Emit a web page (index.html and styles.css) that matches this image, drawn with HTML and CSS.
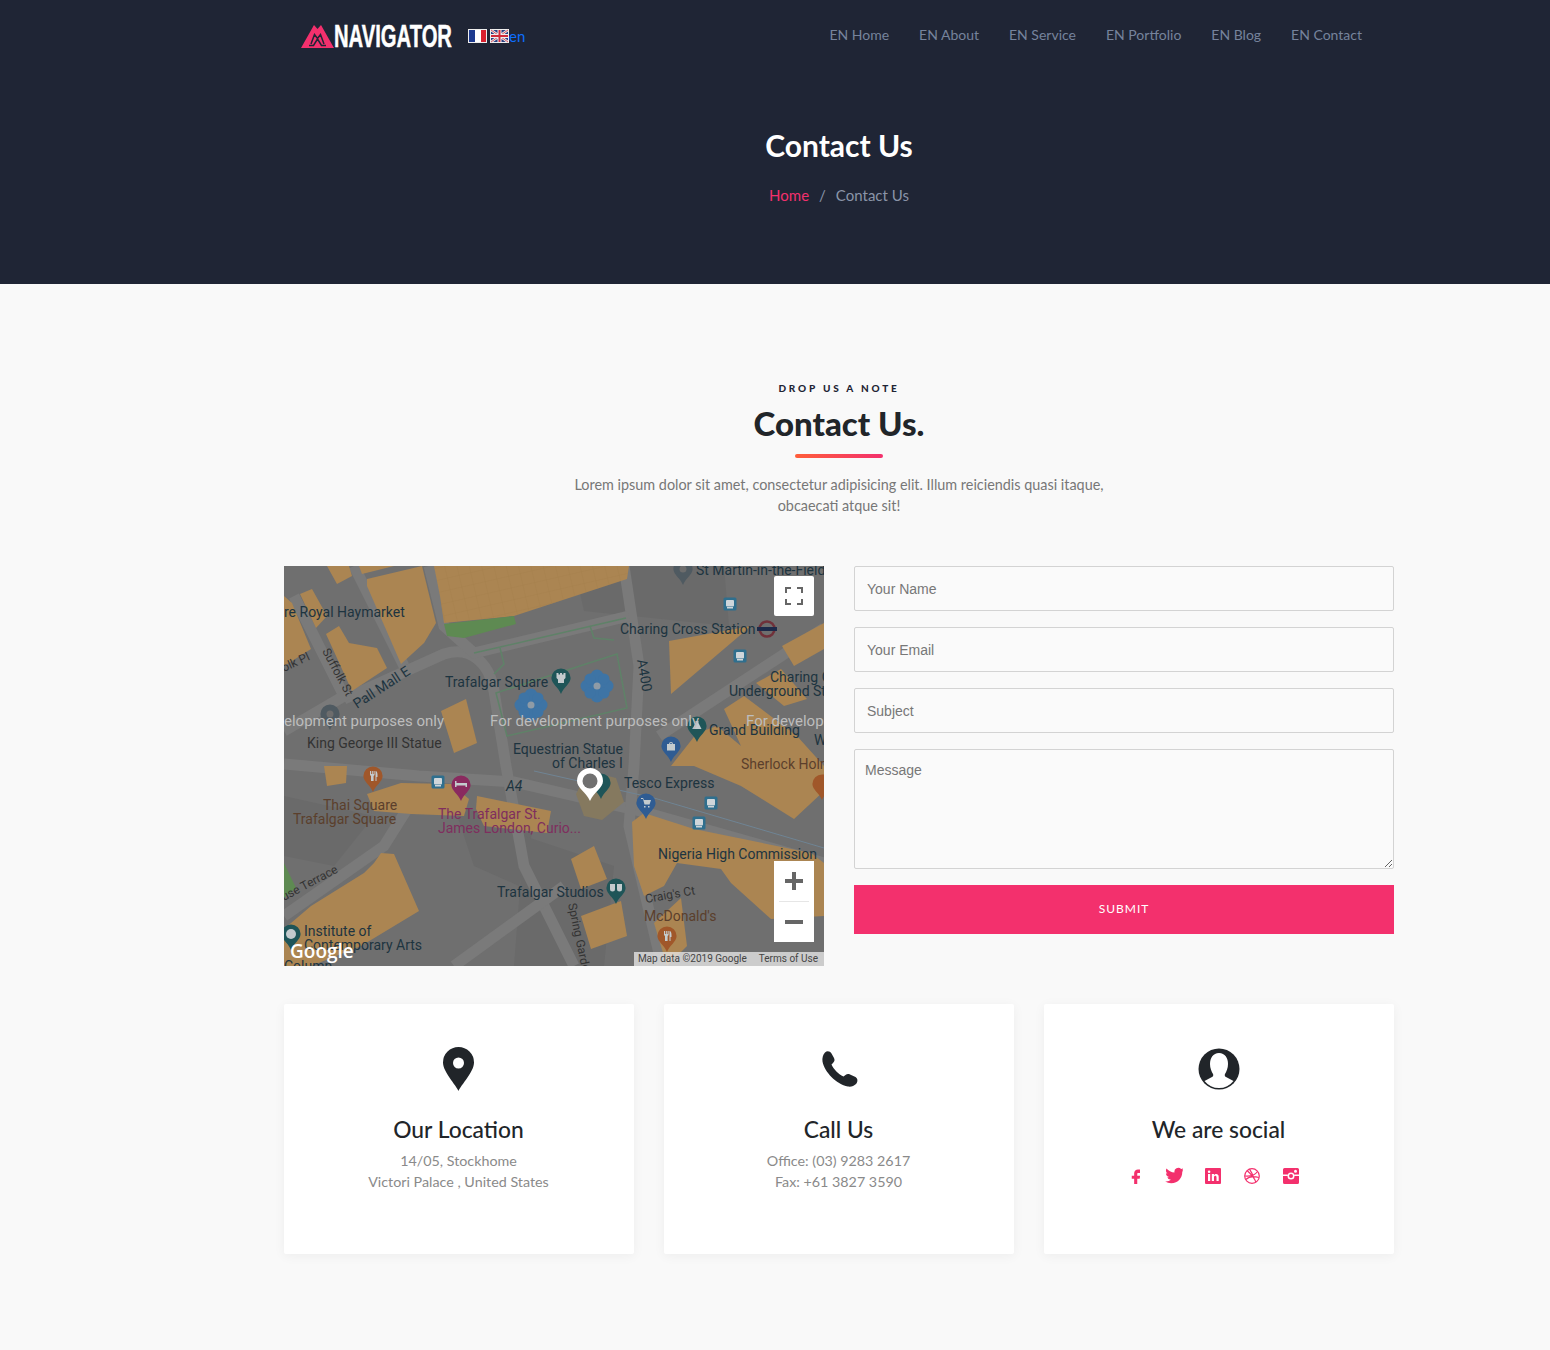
FILE: index.html
```html
<!DOCTYPE html>
<html lang="en">
<head>
<meta charset="utf-8">
<title>Contact Us</title>
<link rel="stylesheet" href="styles.css">
</head>
<body>
<header class="hero">
  <div class="wrap">
    <nav class="topnav">
      <div class="brand">
        <svg class="logo-mark" viewBox="0 0 33 23" width="33" height="23"><path fill="#f3306d" d="M0 23 13 0l3.500 4L20 0l13 23Z"/><path fill="none" stroke="#1f2535" stroke-width="1.500" d="M8 20.500H12.500L16.500 14 20.500 20.500H25M10 19 13.500 9.500 16.500 13.500 19.500 9.500 23 19"/></svg>
        <span class="logo-box"><span class="logo-text">NAVIGATOR</span></span>
        <span class="flags">
          <svg class="flag" viewBox="0 0 19 14" width="19" height="14"><rect width="19" height="14" fill="#eee"/><rect x="1" y="1" width="6" height="12" fill="#1d3a8f"/><rect x="7" y="1" width="6" height="12" fill="#fff"/><rect x="13" y="1" width="5" height="12" fill="#d8202f"/></svg>
          <svg class="flag" viewBox="0 0 19 14" width="19" height="14"><rect width="19" height="14" fill="#eee"/><rect x="1" y="1" width="17" height="12" fill="#2b3f80"/><path d="M1 1 18 13M18 1 1 13" stroke="#eee" stroke-width="2.500"/><path d="M1 1 18 13M18 1 1 13" stroke="#cf2a3a" stroke-width=".8"/><path d="M9.500 1v12M1 7h17" stroke="#eee" stroke-width="4"/><path d="M9.500 1v12M1 7h17" stroke="#cf2a3a" stroke-width="2"/></svg>
          <a class="lang" href="#">en</a>
        </span>
      </div>
      <ul class="menu">
        <li><a href="#">EN Home</a></li>
        <li><a href="#">EN About</a></li>
        <li><a href="#">EN Service</a></li>
        <li><a href="#">EN Portfolio</a></li>
        <li><a href="#">EN Blog</a></li>
        <li><a href="#">EN Contact</a></li>
      </ul>
    </nav>
    <div class="hero-title">
      <h1>Contact Us</h1>
      <p class="crumbs"><a href="#">Home</a><span class="sep">/</span><span>Contact Us</span></p>
    </div>
  </div>
</header>

<main class="wrap content">
  <div class="intro">
    <p class="eyebrow">DROP US A NOTE</p>
    <h2>Contact Us.</h2>
    <div class="rule"></div>
    <p class="lead">Lorem ipsum dolor sit amet, consectetur adipisicing elit. Illum reiciendis quasi itaque, obcaecati atque sit!</p>
  </div>

  <div class="contact-row">
    <div class="map">
      <svg class="map-art" viewBox="0 0 540 400" width="540" height="400">
        <defs>
          <path id="drop" d="M0 20C-3 12-12 7-12 0a12 12 0 0 1 24 0C12 7 3 12 0 20Z"/>
          <g id="bus"><rect x="-6.500" y="-6.500" width="13" height="13" rx="1.500" fill="#2f6f8e"/><rect x="-4" y="-4" width="8" height="6.500" rx="1" fill="#cfd6da"/><rect x="-3" y="3" width="6" height="1.500" fill="#cfd6da"/></g>
          <g id="flower"><circle r="8"/><circle cx="-10" r="6.500"/><circle cx="10" r="6.500"/><circle cy="-10" r="6.500"/><circle cy="10" r="6.500"/><circle cx="-7" cy="-7" r="5.500"/><circle cx="7" cy="-7" r="5.500"/><circle cx="-7" cy="7" r="5.500"/><circle cx="7" cy="7" r="5.500"/></g>
          <pattern id="bld" width="12" height="12" patternUnits="userSpaceOnUse" patternTransform="rotate(-13)"><path d="M0 0H12M0 0V12" stroke="#a27c4b" stroke-width=".7" fill="none"/></pattern>
        </defs>
        <rect width="540" height="400" fill="#6f6f6f"/>
        <g class="blocks">
          <path d="M290 0H440L445 60 300 45Z"/>
          <path d="M170 240 250 260 235 320 190 300Z"/>
          <path d="M240 270 330 300 320 400 230 400Z"/>
          <path d="M0 230 90 250 50 300 0 290Z"/>
        </g>
        <g class="roads">
          <path d="M0 198 135 210 230 216 360 246 540 297"/>
          <path d="M60 133 160 88C185 80 205 95 210 125L222 200 240 300 290 400"/>
          <path d="M375 170 540 62"/>
          <path d="M340 0 355 100 350 200 345 260 378 400"/>
          <path d="M10 30 60 130 0 165"/>
          <path d="M70 0 120 100"/>
          <path d="M145 0 160 60 190 87 345 50"/>
          <path d="M0 350 100 280 125 240"/>
          <path d="M170 400 280 320"/>
        </g>
        <path d="M250 205 370 232 540 282" fill="none" stroke="#6f8494" stroke-width="1"/>
        <g fill="#ab8552">
          <path d="M83 13 138 0 152 57 140 77 117 98 83 20Z"/>
          <path d="M150 0H345L343 13 230 50 160 57 156 30Z"/>
          <path d="M16 28 28 23 43 50 32 62Z"/>
          <path d="M42 68 55 60 65 77 93 82 103 102 68 125Z"/>
          <path d="M0 30 8 37 27 83 0 100Z"/>
          <path d="M43 0H65L68 10 53 18Z"/>
          <path d="M75 0H110L78 8Z"/>
          <path d="M157 145 182 133 193 177 170 187Z"/>
          <path d="M385 75 467 60 387 128Z"/>
          <path d="M498 80 540 57V83L510 100Z"/>
          <path d="M472 117 497 103 523 133 500 140Z"/>
          <path d="M387 200 413 167 433 160 457 180 440 143 460 130 513 170 540 200V225L510 253 457 220 410 200Z"/>
          <path d="M348 256 360 247 410 263 527 287 540 297V350L487 353 447 317 437 303 393 297 380 320 360 330 350 300Z"/>
          <path d="M287 293 310 280 323 313 297 323Z"/>
          <path d="M297 350 337 335 343 370 307 383Z"/>
          <path d="M370 357 397 332 403 380 383 400Z"/>
          <path d="M83 228 117 217 167 218 185 233 180 250 127 248 90 245Z"/>
          <path d="M40 200H63L62 217 43 220Z"/>
          <path d="M193 230 267 245 263 267 200 260 192 243Z"/>
          <path d="M97 287 110 288 135 345 77 380 27 400H0V363L27 340 80 307 90 297Z"/>
        </g>
        <path fill="url(#bld)" d="M150 0H345L343 13 230 50 160 57 156 30Z"/>
        <path fill="#5e8a52" d="M160 58 230 50 232 58 180 72 163 70Z"/>
        <path fill="#5e8a52" d="M0 297 12 322 0 332Z"/>
        <path fill="#85795f" d="M292 228 304 205 332 212 340 236 318 254 300 250Z"/>
        <g fill="none" stroke="#5f8268" stroke-width="1.500">
          <path d="M190 87 342 52"/>
          <path d="M212 127 333 88 343 142 223 170Z"/>
          <path d="M216 82 220 98 210 108"/>
          <path d="M306 60 310 72 330 74"/>
        </g>
        <g fill="#3e74a5"><use href="#flower" x="313" y="120"/><use href="#flower" x="247" y="139"/></g>
        <circle cx="313" cy="120" r="3.500" fill="#8f9ba6"/><circle cx="247" cy="139" r="3.500" fill="#8f9ba6"/>

        <g class="lbl">
          <text x="0" y="51">re Royal Haymarket</text>
          <text x="161" y="121">Trafalgar Square</text>
          <text x="412" y="9">St Martin-in-the-Fields</text>
          <text x="336" y="68">Charing Cross Station</text>
          <text x="486" y="116">Charing C</text>
          <text x="445" y="130">Underground St</text>
          <text x="425" y="169">Grand Building</text>
          <text x="530" y="179">W</text>
          <text x="229" y="188">Equestrian Statue</text>
          <text x="268" y="202">of Charles I</text>
          <text x="340" y="222">Tesco Express</text>
          <text x="374" y="293">Nigeria High Commission</text>
          <text x="213" y="331">Trafalgar Studios</text>
          <text x="20" y="370">Institute of</text>
          <text x="20" y="384">Contemporary Arts</text>
          <text x="0" y="405">Column</text>
          <text x="23" y="182" class="lbl-dim">King George III Statue</text>
          <text transform="translate(73 143) rotate(-33)">Pall Mall E</text>
          <text transform="translate(353 94) rotate(80)">A400</text>
          <text x="222" y="225" class="lbl-it">A4</text>
        </g>
        <g class="lbl-small">
          <text transform="translate(38 85) rotate(62)">Suffolk St</text>
          <text transform="translate(0 106) rotate(-25)">olk Pl</text>
          <text transform="translate(0 335) rotate(-28)">use Terrace</text>
          <text transform="translate(362 337) rotate(-10)">Craig's Ct</text>
          <text transform="translate(284 338) rotate(78)">Spring Garde</text>
        </g>
        <g class="lbl-brown">
          <text x="457" y="203">Sherlock Holn</text>
          <text x="39" y="244">Thai Square</text>
          <text x="9" y="258">Trafalgar Square</text>
          <text x="360" y="355">McDonald's</text>
        </g>
        <g class="lbl-purple">
          <text x="154" y="253">The Trafalgar St.</text>
          <text x="154" y="267">James London, Curio...</text>
        </g>

        <g fill="#4f5a61"><use href="#drop" transform="translate(46 148) scale(.8)"/><use href="#drop" transform="translate(399 3) scale(.8)"/></g>
        <g fill="#1f5558">
          <use href="#drop" transform="translate(277 112) scale(.8)"/>
          <use href="#drop" transform="translate(413 160) scale(.8)"/>
          <use href="#drop" transform="translate(7 368) scale(.8)"/>
          <use href="#drop" transform="translate(332 322) scale(.8)"/>
          <use href="#drop" transform="translate(317 217) scale(.8)"/>
        </g>
        <g fill="#2f5c93"><use href="#drop" transform="translate(387 180) scale(.8)"/><use href="#drop" transform="translate(362 237) scale(.8)"/></g>
        <g fill="#a0572a"><use href="#drop" transform="translate(89 210) scale(.8)"/><use href="#drop" transform="translate(383 370) scale(.8)"/><use href="#drop" transform="translate(538 218) scale(.8)"/></g>
        <use href="#drop" fill="#8a2a5f" transform="translate(177 219) scale(.8)"/>
        <g fill="#c4cbce">
          <circle cx="46" cy="148" r="3.500" fill="#6d6d6d"/><circle cx="399" cy="3" r="3.500" fill="#6d6d6d"/>
          <path d="M272.500 107h2v1.500h1.500V107h2v1.500h1.500V107h2v5l-1.500 1.500V117h-6v-3.500l-1.500-1.500Z"/>
          <path d="M411.500 155h3v2l2 4 1 2h-9l1-2 2-4Z"/>
          <circle cx="7" cy="368" r="5"/>
          <path d="M326 318h5v5a2.500 2.500 0 0 1-5 0ZM333 318h5v5a2.500 2.500 0 0 1-5 0Z"/>
          <path d="M383 178h8v6.500h-8ZM385 178a2 2 0 0 1 4 0h-1a1 1 0 0 0-2 0Z"/>
          <path d="M357 232h2l1 2h7l-1.500 4.500h-5l-1.500-5.500h-2ZM360 240h1.500v1.500H360ZM364 240h1.500v1.500H364Z"/>
          <path d="M86 205h1v3h.8v-3h1v3h.8v-3h1v4l-1 1v5h-2.600v-5l-1-1Z"/>
          <path d="M91.500 205c1.500 0 2 2 2 4v2h-1v4h-1Z"/>
          <path d="M380 365h1v3h.8v-3h1v3h.8v-3h1v4l-1 1v5h-2.600v-5l-1-1Z"/>
          <path d="M385.500 365c1.500 0 2 2 2 4v2h-1v4h-1Z"/>
          <path d="M171 215h1.500v2h10.500v4h-1.500v-1.500h-9V221H171Z"/>
        </g>
        <use href="#bus" x="446" y="38"/><use href="#bus" x="456" y="90"/><use href="#bus" x="154" y="216"/><use href="#bus" x="427" y="237"/><use href="#bus" x="415" y="257"/>
        <circle cx="483" cy="63" r="7.500" fill="none" stroke="#70313a" stroke-width="2.500"/><rect x="473" y="61" width="20" height="4" fill="#1d2a4a"/>
        <path d="M306 235C302 226 293 222 293 215a13 13 0 0 1 26 0C319 222 310 226 306 235Z" fill="#fff"/><circle cx="306" cy="215" r="7.500" fill="#707070"/>
        <g class="watermark">
          <text x="0" y="160">elopment purposes only</text>
          <text x="206" y="160">For development purposes only</text>
          <text x="462" y="160">For develop</text>
        </g>
        <text x="6" y="392" class="g-logo">Google</text>
      </svg>
      <button class="map-btn map-full" type="button" aria-label="Fullscreen">
        <svg viewBox="0 0 18 18" width="18" height="18"><path d="M0 6V0h6v2H2v4Zm12-6h6v6h-2V2h-4ZM0 12h2v4h4v2H0Zm16 0h2v6h-6v-2h4Z" fill="#666"/></svg>
      </button>
      <div class="map-zoom">
        <button class="map-btn" type="button" aria-label="Zoom in"><svg viewBox="0 0 18 18" width="18" height="18"><path d="M7 0h4v7h7v4h-7v7H7v-7H0V7h7Z" fill="#666"/></svg></button>
        <i class="zoom-sep"></i>
        <button class="map-btn" type="button" aria-label="Zoom out"><svg viewBox="0 0 18 18" width="18" height="18"><rect y="7" width="18" height="4" fill="#666"/></svg></button>
      </div>
      <div class="attrib"><span>Map data ©2019 Google</span><span>Terms of Use</span></div>
    </div>

    <form class="form">
      <input type="text" placeholder="Your Name">
      <input type="email" placeholder="Your Email">
      <input type="text" placeholder="Subject">
      <textarea placeholder="Message"></textarea>
      <button class="submit" type="button">SUBMIT</button>
    </form>
  </div>

  <div class="cards">
    <article class="card">
      <svg class="card-icon" viewBox="0 0 31 44" width="31" height="44"><path fill-rule="evenodd" fill="#212529" d="M15.500 44C13 38 0 25 0 15.500a15.500 15.500 0 0 1 31 0C31 25 18 38 15.500 44ZM15.500 10.500a5.500 5.500 0 1 0 0 11 5.500 5.500 0 0 0 0-11Z"/></svg>
      <h3>Our Location</h3>
      <p>14/05, Stockhome<br>Victori Palace , United States</p>
    </article>
    <article class="card">
      <svg class="card-icon" viewBox="0 0 44 44" width="44" height="44"><path fill="#212529" d="M8 5.500C10 3.500 13 4 14.500 6.500L17 11C18 13 17.500 14.500 16 16L14.500 17.500C16.500 22 21 27 26.500 29.500L28.500 28C30 26.800 31.500 26.800 33 27.500L38.500 30C41 31.500 41 35 39 37C37 39 34 40 31 39.500C19 37 7.500 25 5.500 14.500 5 11 6 7.500 8 5.500Z"/></svg>
      <h3>Call Us</h3>
      <p>Office: (03) 9283 2617<br>Fax: +61 3827 3590</p>
    </article>
    <article class="card">
      <svg class="card-icon" viewBox="0 0 44 44" width="44" height="44"><circle cx="22" cy="22" r="20.500" fill="#212529"/><path fill="#fff" d="M22 6c6 0 9 5 9 11 0 4-1.500 7.500-3 10-.6 1 0 2.500 1 3l7.500 4a18.500 18.500 0 0 1-29 0l7.500-4c1-.5 1.600-2 1-3-1.500-2.500-3-6-3-10 0-6 3-11 9-11Z"/></svg>
      <h3>We are social</h3>
      <div class="social">
        <a href="#" aria-label="Facebook"><svg viewBox="1 1 16 23" width="11" height="16"><path d="M14 8h3.500V3H14c-3 0-5.500 2.500-5.500 5.500V12H5v4.500h3.500V24H13v-7.500h3.500l.7-4.500H13V9c0-.6.400-1 1-1Z"/></svg></a>
        <a href="#" aria-label="Twitter"><svg viewBox="-1.500 0 24 24" width="19" height="19"><path d="M23.950 4.570a10 10 0 0 1-2.820.78 4.960 4.960 0 0 0 2.160-2.720c-.95.55-2 .96-3.130 1.200a4.920 4.920 0 0 0-8.380 4.480C7.690 8.100 4.070 6.130 1.640 3.160a4.820 4.820 0 0 0-.67 2.480c0 1.710.87 3.210 2.190 4.100a4.900 4.900 0 0 1-2.230-.61v.06c0 2.390 1.700 4.380 3.950 4.830a5 5 0 0 1-2.210.08 4.940 4.940 0 0 0 4.600 3.420A9.870 9.870 0 0 1 0 19.540a14 14 0 0 0 7.560 2.210c9.050 0 14-7.500 14-13.980 0-.21 0-.42-.02-.63a9.940 9.940 0 0 0 2.410-2.570z"/></svg></a>
        <a href="#" aria-label="LinkedIn"><svg viewBox="0 0 16 16" width="16" height="16"><path fill-rule="evenodd" d="M1 0h14a1 1 0 0 1 1 1v14a1 1 0 0 1-1 1H1a1 1 0 0 1-1-1V1a1 1 0 0 1 1-1Zm2 6v7h2.200V6Zm1.100-3.500a1.300 1.300 0 1 0 0 2.600 1.300 1.300 0 0 0 0-2.600ZM6.800 6v7H9V9.300c0-2 2.500-2 2.500 0V13h2.200V8.800c0-3.500-3.500-3.500-4.700-1.700V6Z"/></svg></a>
        <a href="#" aria-label="Dribbble"><svg viewBox="0 0 16 16" width="16" height="16"><g fill="none" stroke="#f3306d" stroke-width="1.200"><circle cx="8" cy="8" r="7.300"/><path d="M3 2.500C7 6 11 11 12 14.500M1 8c5 .5 10-1 12.500-4.500M5.500 1.200c2 3 3.500 6 4.500 9M1.800 11.500C5 8.500 9.500 8 14.800 9.500"/></g></svg></a>
        <a href="#" aria-label="Instagram"><svg viewBox="0 0 16 16" width="16" height="16"><path fill-rule="evenodd" d="M1.500 0h13A1.500 1.500 0 0 1 16 1.500v13a1.500 1.500 0 0 1-1.500 1.500h-13A1.500 1.500 0 0 1 0 14.500v-13A1.500 1.500 0 0 1 1.500 0ZM8 4.500a3.500 3.500 0 1 0 0 7 3.500 3.500 0 0 0 0-7Zm0 1.500a2 2 0 1 1 0 4 2 2 0 0 1 0-4ZM12.500 1.800a1.500 1.500 0 1 0 0 3 1.500 1.500 0 0 0 0-3ZM0 6.500h4.500v1.600H0Zm11.500 0H16v1.600h-4.500Z"/></svg></a>
      </div>
    </article>
  </div>
</main>
</body>
</html>
```
FILE: styles.css
```css
* { box-sizing: border-box; }
html, body { margin: 0; padding: 0; }
body {
  background: #f9f9f9;
  font-family: "Lato", "Open Sans", sans-serif;
  color: #212529;
  min-height: 1350px;
}
a { text-decoration: none; }
ul { list-style: none; margin: 0; padding: 0; }
h1, h2, h3, p { margin: 0; }

.wrap { width: 1110px; margin-left: 284px; }

.hero { background: #1f2535; height: 284px; }
.topnav {
  display: flex;
  align-items: center;
  justify-content: space-between;
  height: 72px;
  padding: 0 32px 0 17px;
}
.brand { display: flex; align-items: center; }
.logo-mark { display: block; }
.logo-box { display: block; width: 119px; height: 24px; }
.logo-text {
  display: block;
  font-family: "Liberation Sans", sans-serif;
  font-weight: 700;
  font-size: 32px;
  line-height: 24px;
  color: #fff;
  white-space: nowrap;
  -webkit-text-stroke: .5px #fff;
  transform: scaleX(.632);
  transform-origin: left center;
}
.flags { display: flex; align-items: center; gap: 3px; margin-left: 15px; }
.flag { display: block; }
.lang { color: #0d6efd; font-size: 15px; line-height: 20px; margin-left: -3px; }
.menu { display: flex; gap: 30px; margin-bottom: 2px; }
.menu a { display: block; color: #76839c; font-size: 14px; line-height: 20px; }

.hero-title { text-align: center; padding-top: 53px; }
.hero-title h1 { color: #fff; font-size: 30px; line-height: 40px; font-weight: 700; }
.crumbs { margin-top: 18px; font-size: 15px; line-height: 24px; color: #8a94a8; }
.crumbs a { color: #f3306d; }
.sep { margin: 0 10px; }

.content { padding-top: 96px; padding-bottom: 96px; }
.intro { text-align: center; }
.eyebrow { font-size: 10px; line-height: 16px; font-weight: 900; letter-spacing: 2.800px; color: #1f2535; }
.intro h2 { font-size: 33px; line-height: 44px; font-weight: 900; color: #212529; margin-top: 5px; }
.rule {
  width: 88px; height: 4px; margin: 9px auto 0;
  border-radius: 2px;
  background: linear-gradient(90deg, #ff5e3a, #f3306d);
}
.lead { width: 560px; margin: 16px auto 0; font-size: 14.400px; line-height: 21px; color: #777; }

.contact-row { display: flex; gap: 30px; margin-top: 50px; align-items: flex-start; }
.map { position: relative; width: 540px; height: 400px; overflow: hidden; flex: none; }
.map-art { display: block; font-family: "Roboto", sans-serif; }
.blocks path { fill: #6a6a6a; }
.roads path { fill: none; stroke: #7a7a7a; stroke-width: 11; }
.lbl text { font-size: 14px; fill: #1d3440; }
.lbl .lbl-dim { fill: #333; }
.lbl .lbl-it { font-style: italic; }
.lbl-small text { font-size: 12px; fill: #333; }
.lbl-brown text { font-size: 14px; fill: #5b3f2c; }
.lbl-purple text { font-size: 14px; fill: #7f2e5e; }
.watermark text { font-size: 15px; fill: #bdbdbd; }
.g-logo { font-family: "Open Sans", sans-serif; font-size: 19px; font-weight: 600; fill: #fff; }

.map-btn {
  display: flex; align-items: center; justify-content: center;
  width: 40px; height: 40px; padding: 0; border: 0; background: #fff;
}
.map-full { position: absolute; top: 10px; right: 10px; border-radius: 2px; }
.map-zoom {
  position: absolute; top: 295px; right: 10px; width: 40px;
  background: #fff; border-radius: 2px;
}
.zoom-sep { display: block; height: 1px; width: 30px; margin: 0 5px; background: #e6e6e6; }
.attrib {
  position: absolute; right: 0; bottom: 0;
  display: flex; gap: 12px; height: 14px; padding: 0 6px 0 4px;
  background: rgba(235,235,235,.75);
  font: 10px/14px "Roboto", sans-serif; color: #444;
}

.form { flex: 1; display: flex; flex-direction: column; gap: 16px; }
.form input, .form textarea {
  display: block; width: 100%;
  border: 1px solid #d3d3d3; border-radius: 2px; background: #fafafa;
  font: 14px "Liberation Sans", Arial, sans-serif; color: #333;
  outline: 0;
}
.form input { height: 45px; padding: 0 12px; }
.form textarea { height: 120px; padding: 12px 10px; }
.form ::placeholder { color: #777; opacity: 1; }
.submit {
  height: 49px; border: 0; padding: 0 0 2px; background: #f3306d; color: #fff;
  font: 400 12px "Lato", sans-serif; letter-spacing: 1px;
}

.cards { display: flex; gap: 30px; margin-top: 38px; }
.card {
  flex: 1; height: 250px; background: #fff; border-radius: 2px;
  box-shadow: 0 2px 12px rgba(0,0,0,.05);
  padding: 43px 1px 0 0; text-align: center;
}
.card-icon { display: block; margin: 0 auto; }
.card h3 { font-size: 22.800px; line-height: 30px; font-weight: 500; color: #212529; margin-top: 23px; }
.card p { font-size: 14.300px; line-height: 21px; color: #8a8a8a; margin-top: 6px; }
.social { display: flex; justify-content: center; align-items: center; gap: 22px; margin: 22px 12px 0 0; }
.social a { display: flex; align-items: center; justify-content: center; width: 17px; height: 19px; }
.social svg { display: block; flex: none; fill: #f3306d; }
```
